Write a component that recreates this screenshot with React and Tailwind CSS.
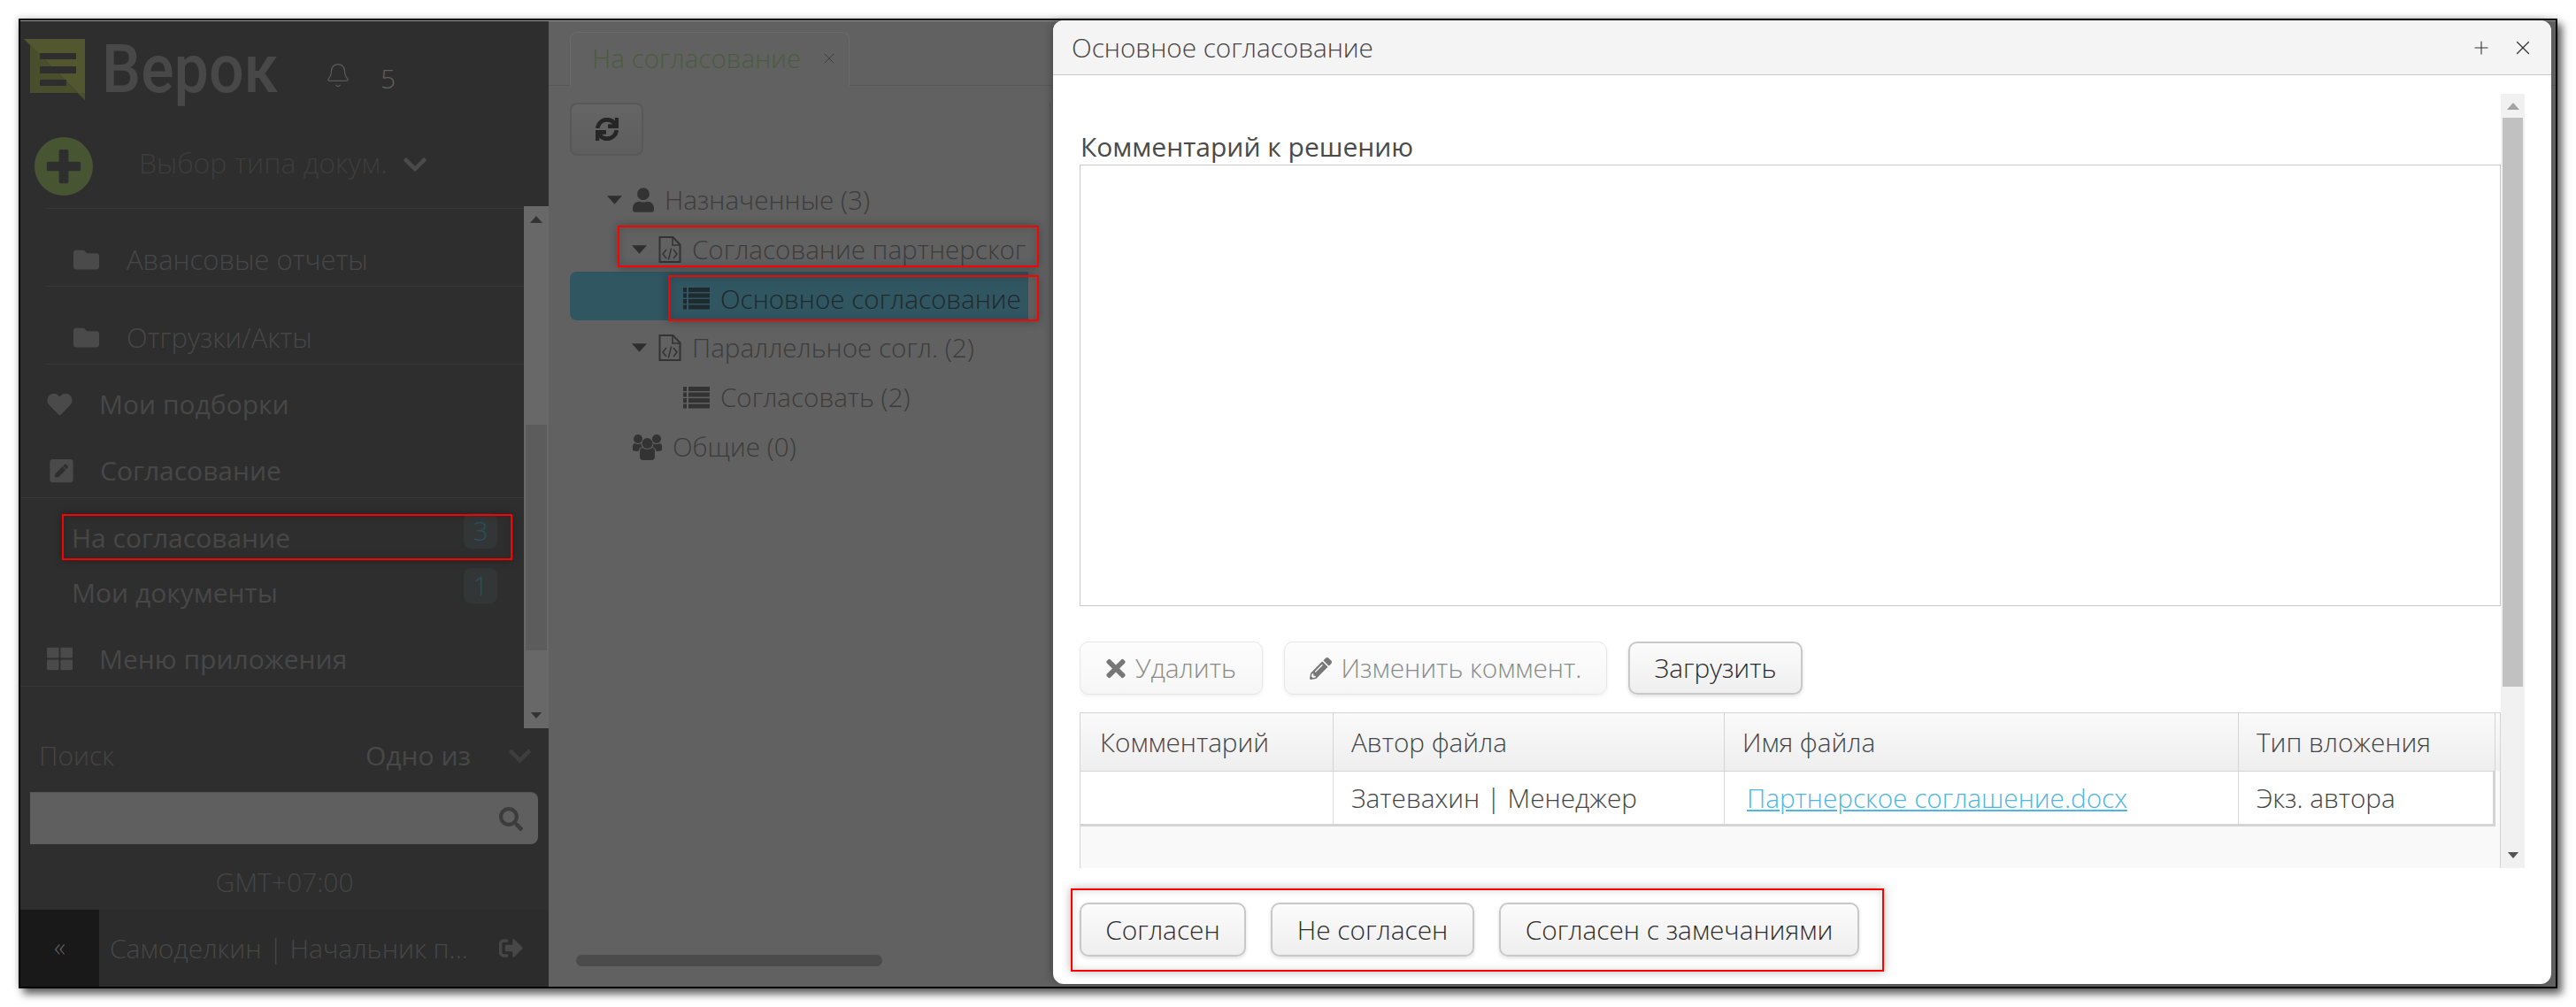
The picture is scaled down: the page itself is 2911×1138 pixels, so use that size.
import React from "react";
import {
  FaFolder, FaHeart, FaPenSquare, FaThLarge, FaChevronDown, FaSearch, FaSignOutAlt,
  FaPlusCircle, FaUser, FaSync, FaTimes, FaPencilAlt,
} from "react-icons/fa";
import { Bell, X, Plus } from "lucide-react";

function Tri({ up, cls }) {
  return (
    <svg viewBox="0 0 14 8" className={cls}>
      <polygon points={up ? "7,0 14,8 0,8" : "0,0 14,0 7,8"} fill="currentColor" />
    </svg>
  );
}

function ListIcon({ cls }) {
  return (
    <svg viewBox="0 0 30 25" className={cls}>
      {[0, 6.5, 13, 19.5].map((y) => (
        <g key={y} fill="currentColor">
          <rect x="0" y={y} width="4" height="5" />
          <rect x="6" y={y} width="24" height="5" />
        </g>
      ))}
    </svg>
  );
}

function FileCode({ cls }) {
  return (
    <svg viewBox="0 0 26 30" className={cls} fill="none" stroke="currentColor">
      <path d="M1.5 1 H16.5 L24.5 9.5 V29 H1.5 Z" strokeWidth="2" />
      <path d="M16 1 V10 H24.5" strokeWidth="1.6" />
      <path d="M9 15 L5 20 L9 25 M17 15 L21 20 L17 25 M14.6 13.5 L11.4 26.5" strokeWidth="1.5" />
    </svg>
  );
}

function UsersIcon({ cls }) {
  return (
    <svg viewBox="0 0 33 30" className={cls} fill="currentColor">
      <circle cx="16.5" cy="11" r="6" />
      <circle cx="6" cy="6" r="5" />
      <circle cx="27" cy="6" r="5" />
      <path d="M8 20 Q8 16.5 11 16 Q16.5 20 22 16 Q25 16.5 25 20 V26 Q25 30 21 30 H12 Q8 30 8 26 Z" />
      <path d="M0 19 V14 Q0 11.5 2.5 11 Q6 13 9.5 11 Q9.5 14 11 15 Q7 16 6.5 20 Q2 20 0 19 Z" />
      <path d="M33 19 V14 Q33 11.5 30.5 11 Q27 13 23.5 11 Q23.5 14 22 15 Q26 16 26.5 20 Q31 20 33 19 Z" />
    </svg>
  );
}

function Logo() {
  return (
    <svg viewBox="0 0 69 69" className="w-[69px] h-[69px] shrink-0">
      <polygon points="0,0 69,0 69,69" fill="#53572f" />
      <polygon points="0,0 69,69 69,61 7,61 7,7" fill="#494e2c" />
      <rect x="18" y="16" width="41" height="7" fill="#2e2e2e" />
      <rect x="18" y="31" width="41" height="8" fill="#2e2e2e" />
      <rect x="18" y="46" width="30" height="7" fill="#2e2e2e" />
    </svg>
  );
}

function RedBox({ cls }) {
  return (
    <div className={"absolute border-2 border-[#ff0000] shadow-[0_0_10px_rgba(0,0,0,0.3),inset_0_0_10px_rgba(0,0,0,0.15)] pointer-events-none " + cls} />
  );
}

function Btn({ children, cls, disabled }) {
  return (
    <button
      className={
        "flex items-center justify-center gap-[11px] rounded-[10px] font-light text-[29.8px] bg-linear-to-b " +
        (disabled
          ? "border border-[#e6e6e6] from-[#fdfdfd] to-[#f6f6f6] text-[#8a8a8a] shadow-[0_2px_4px_rgba(0,0,0,0.06)] "
          : "border-2 border-[#c8c8c8] from-[#fbfbfb] to-[#efefef] text-[#2c2c2c] shadow-[0_2px_4px_rgba(0,0,0,0.12)] ") +
        cls
      }
    >
      {children}
    </button>
  );
}

function Sidebar() {
  return (
    <aside className="w-[597px] shrink-0 bg-[#2e2e2e] flex flex-col text-[#474747] text-[30px] leading-none">
      <div className="h-[211px] flex flex-col">
        <div className="h-[130px] flex items-start pl-[4px] pt-[20px]">
          <Logo />
          <span className="ml-[19px] w-[197px] h-[69px] leading-[69px] text-[76px] font-medium text-[#484848] font-['Roboto',sans-serif] origin-left scale-x-[0.92]">Верок</span>
          <Bell strokeWidth={1} className="ml-[55px] mt-[26px] w-[30px] h-[30px] text-[#5a5a5a]" />
          <span className="ml-[33px] mt-[30px] text-[#5f5f5f]">5</span>
        </div>
        <div className="h-[81px] flex items-start pl-[15px]">
          <FaPlusCircle className="w-[68px] h-[68px] text-[#485533] shrink-0" />
          <span className="ml-[51px] w-[270px] mt-[14px] h-[32px] whitespace-nowrap text-[32px] text-[#3d3d3d]">Выбор типа докум.</span>
          <FaChevronDown className="ml-[27px] mt-[17px] w-[30px] h-[30px] text-[#4a4a4a]" />
        </div>
      </div>

      <div className="h-[588px] flex">
        <div className="w-[569px] overflow-hidden">
          <div className="ml-[29px] h-[88px] border-t border-[#383838] pl-[31px] pt-[27px] flex items-center text-[31px]">
            <FaFolder className="w-[29px] h-[29px] text-[#4a4a4a]" />
            <span className="ml-[31px]">Авансовые отчеты</span>
          </div>
          <div className="ml-[29px] h-[88px] border-t border-[#383838] pl-[31px] pt-[27px] flex items-center text-[31px]">
            <FaFolder className="w-[29px] h-[29px] text-[#4a4a4a]" />
            <span className="ml-[31px]">Отгрузки/Акты</span>
          </div>
          <div className="ml-[29px] h-[84px] border-t border-[#383838] pt-[6px] flex items-center">
            <FaHeart className="w-[31px] h-[28px] text-[#4a4a4a]" />
            <span className="ml-[29px] font-normal">Мои подборки</span>
          </div>
          <div className="h-[68px] border-b border-[#383838] pl-[31px] pt-[6px] flex items-center">
            <FaPenSquare className="w-[27px] h-[30px] text-[#4a4a4a] mx-[2px]" />
            <span className="ml-[28px] font-normal">Согласование</span>
          </div>
          <div className="h-[15px]" />
          <div className="h-[62px] flex items-start pl-[58px]">
            <span className="leading-[60px] font-normal flex-1">На согласование</span>
            <span className="mt-[2px] mr-[30px] w-[38px] h-[40px] rounded-lg bg-[#333637] text-[#28505f] flex items-center justify-center">3</span>
          </div>
          <div className="h-[62px] flex items-start pl-[58px]">
            <span className="leading-[60px] font-normal flex-1">Мои документы</span>
            <span className="mt-[2px] mr-[30px] w-[38px] h-[40px] rounded-lg bg-[#333637] text-[#28505f] flex items-center justify-center">1</span>
          </div>
          <div className="h-[74px] border-b border-[#383838] pl-[30px] pt-[12px] flex items-center">
            <FaThLarge className="w-[29px] h-[29px] text-[#4a4a4a]" />
            <span className="ml-[30px] font-normal">Меню приложения</span>
          </div>
          <div className="pl-[29px] mt-[44px] whitespace-nowrap">Информация</div>
        </div>
        <div className="w-[28px] bg-[#686868] flex flex-col -mt-[2px] text-[#333333]">
          <div className="h-[247px] flex justify-center pt-[11px]">
            <Tri up cls="w-[14px] h-[8px]" />
          </div>
          <div className="mx-[2px] h-[255px] bg-[#5c5c5c]" />
          <div className="flex-1 flex justify-center items-end pb-[11px]">
            <Tri cls="w-[14px] h-[7px]" />
          </div>
        </div>
      </div>

      <div className="h-[205px]">
        <div className="h-[62px] pl-[21px] flex items-center">
          <span className="w-[369px] text-[#454545]">Поиск</span>
          <span className="w-[160px] font-normal text-[#484848]">Одно из</span>
          <FaChevronDown className="w-[29px] h-[29px] text-[#3e3e3e]" />
        </div>
        <div className="mt-[10px] ml-[11px] w-[574px] h-[59px] bg-[#5f5f5f] border-t border-[#555555] rounded-r-lg flex items-center justify-end pr-[17px]">
          <FaSearch className="w-[27px] h-[27px] text-[#3c3c3c]" />
        </div>
        <div className="pt-[28px] text-center text-[#454545]">GMT+07:00</div>
      </div>

      <div className="h-[87px] bg-[#2c2c2c] flex items-center">
        <div className="w-[89px] h-full bg-[#191919] flex items-center justify-center text-[#5a5a5a] pb-[4px]">«</div>
        <span className="ml-[12px] w-[440px] whitespace-nowrap text-[#474747]">Самоделкин | Начальник п...</span>
        <FaSignOutAlt className="w-[27px] h-[27px] text-[#474747]" />
      </div>
    </aside>
  );
}

function TreeRow({ cls, children }) {
  return <div className={"flex items-center whitespace-nowrap " + cls}>{children}</div>;
}

function Main() {
  return (
    <main className="flex-1 relative bg-[#616161] flex flex-col text-[#3c3c3c] text-[29.6px] leading-none">
      <div className="h-[73px] border-b border-[#585858] pl-[24px] flex items-end">
        <div className="w-[316px] h-[61px] -mb-px bg-[#616161] border border-b-0 border-[#6b6b6b] rounded-t-lg pl-[24px] flex items-center text-[#4b5c3e] pb-[2px]">
          <span className="w-[258px]">На согласование</span>
          <X strokeWidth={1.2} className="w-[20px] h-[20px] text-[#3f3f3f]" />
        </div>
      </div>
      <div className="mt-[19px] ml-[24px] w-[83px] h-[60px] rounded-lg border-2 border-[#585858] bg-linear-to-b from-[#656565] to-[#5e5e5e] flex items-center justify-center text-[#262626]">
        <FaSync className="w-[26px] h-[26px]" stroke="currentColor" strokeWidth={24} />
      </div>
      <div className="mt-[23px]">
        <TreeRow cls="h-[56px] pb-[2px] pl-[66px]">
          <Tri cls="w-[17px] h-[10px] text-[#2e2e2e]" />
          <FaUser className="ml-[12px] w-[24px] h-[28px] text-[#333333]" />
          <span className="ml-[12px]">Назначенные (3)</span>
        </TreeRow>
        <TreeRow cls="h-[52px] pt-[2px] pl-[94px]">
          <Tri cls="w-[17px] h-[10px] text-[#2e2e2e] shrink-0" />
          <FileCode cls="ml-[13px] w-[26px] h-[30px] text-[#333333] shrink-0" />
          <span className="ml-[12px]">Согласование партнерског</span>
        </TreeRow>
        <TreeRow cls="h-[55px] pt-[6px] pl-[128px] ml-[24px] w-[518px] bg-[#305661] rounded-l-lg text-[#20282c]">
          <ListIcon cls="w-[30px] h-[25px] text-[#1f2a2f]" />
          <span className="ml-[12px]">Основное согласование</span>
        </TreeRow>
        <TreeRow cls="h-[56px] mt-[4px] pb-[2px] pl-[94px]">
          <Tri cls="w-[17px] h-[10px] text-[#2e2e2e]" />
          <FileCode cls="ml-[13px] w-[26px] h-[30px] text-[#333333]" />
          <span className="ml-[12px]">Параллельное согл. (2)</span>
        </TreeRow>
        <TreeRow cls="h-[56px] pb-[2px] pl-[152px]">
          <ListIcon cls="w-[30px] h-[25px] text-[#333333]" />
          <span className="ml-[12px]">Согласовать (2)</span>
        </TreeRow>
        <TreeRow cls="h-[56px] pb-[2px] pl-[95px]">
          <UsersIcon cls="w-[33px] h-[30px] text-[#333333]" />
          <span className="ml-[12px]">Общие (0)</span>
        </TreeRow>
      </div>
      <div className="flex-1" />
      <div className="ml-[31px] mb-[23px] w-[346px] h-[13px] rounded-full bg-[#4b4b4b]" />
      <div className="absolute left-[566px] top-[92px] bottom-[17px] w-px bg-[#575757]" />
    </main>
  );
}

function Th({ children, cls }) {
  return <div className={"h-[65px] flex items-center border-r border-[#d4d4d4] " + cls}>{children}</div>;
}
function Td({ children, cls }) {
  return <div className={"h-[59px] flex items-center border-r border-[#d9d9d9] " + cls}>{children}</div>;
}

function Modal() {
  return (
    <section className="absolute left-[1167px] top-0 w-[1693px] h-[1089px] bg-white rounded-xl overflow-hidden flex flex-col text-[#444444] text-[29.7px] font-light leading-none shadow-[-3px_0_8px_rgba(0,0,0,0.2)]">
      <header className="h-[62px] shrink-0 bg-[#f4f4f4] border-b border-[#c9c9c9] flex items-center pl-[21px] pr-[19px]">
        <span className="flex-1">Основное согласование</span>
        <Plus strokeWidth={1.1} className="w-[24px] h-[24px] text-[#333333]" />
        <X strokeWidth={1.1} className="ml-[22px] w-[26px] h-[26px] text-[#333333]" />
      </header>
      <div className="mt-[21px] ml-[30px] h-[875px] flex overflow-hidden">
        <div className="w-[1606px]">
          <div className="pt-[45px] h-[75px] pl-px text-[30px] font-normal text-[#4a4a4a] leading-[30px]">Комментарий к решению</div>
          <div className="mt-[5px] h-[499px] border border-[#c8c8c8]" />
          <div className="mt-[40px] flex gap-[24px]">
            <Btn disabled cls="w-[207px] h-[60px]"><FaTimes className="w-[22px] h-[31px] text-[#777777]" /><span>Удалить</span></Btn>
            <Btn disabled cls="w-[365px] h-[60px]"><FaPencilAlt className="w-[25px] h-[25px] text-[#777777]" /><span>Изменить коммент.</span></Btn>
            <Btn cls="w-[197px] h-[60px]">Загрузить</Btn>
          </div>
          <div className="mt-[20px] h-[176px] bg-[#f9f9f9] border-l border-r border-[#d4d4d4]">
            <div className="border-t border-[#d4d4d4] grid grid-cols-[286px_442px_581px_290px_5px]">
              <Th cls="pl-[22px] bg-linear-to-b from-[#fafafa] to-[#eeeeee]">Комментарий</Th>
              <Th cls="pl-[20px] bg-linear-to-b from-[#fafafa] to-[#eeeeee]">Автор файла</Th>
              <Th cls="pl-[20px] bg-linear-to-b from-[#fafafa] to-[#eeeeee]">Имя файла</Th>
              <Th cls="pl-[20px] bg-linear-to-b from-[#fafafa] to-[#eeeeee]">Тип вложения</Th>
              <Th cls="bg-linear-to-b from-[#fafafa] to-[#eeeeee] border-r-0" />
            </div>
            <div className="grid grid-cols-[286px_442px_581px_290px] w-[1599px] border-t border-b-[3px] border-b-[#d4d4d4] border-t-[#d4d4d4] bg-white">
              <Td />
              <Td cls="pl-[20px]">Затевахин | Менеджер</Td>
              <Td cls="pl-[25px]"><a href="#" className="text-[#4db6e2] underline">Партнерское соглашение.docx</a></Td>
              <Td cls="pl-[20px] border-r-[3px] border-r-[#d4d4d4]">Экз. автора</Td>
            </div>
          </div>
        </div>
        <div className="w-[27px] bg-[#f1f1f1] flex flex-col">
          <div className="h-[27px] flex items-center justify-center text-[#a3a3a3]"><Tri up cls="w-[14px] h-[8px]" /></div>
          <div className="ml-[2px] w-[23px] h-[643px] bg-[#c1c1c1]" />
          <div className="flex-1 flex items-end justify-center pb-[11px] text-[#555555]"><Tri cls="w-[14px] h-[7px]" /></div>
        </div>
      </div>
      <div className="mt-[39px] ml-[30px] flex gap-[28px]">
        <Btn cls="w-[188px] h-[61px]">Согласен</Btn>
        <Btn cls="w-[230px] h-[61px]">Не согласен</Btn>
        <Btn cls="w-[407px] h-[61px]">Согласен с замечаниями</Btn>
      </div>
    </section>
  );
}

export default function App() {
  return (
    <div className="w-[2911px] h-[1138px] bg-white pt-[21px] pl-[21px] font-['Open_Sans',sans-serif] font-light overflow-hidden">
      <div className="relative w-[2869px] h-[1096px] border-2 border-black shadow-[5px_6px_9px_rgba(0,0,0,0.65),-2px_-2px_6px_rgba(0,0,0,0.12)] flex flex-col">
        <div className="h-px bg-[#9a9a9a] shrink-0" />
        <div className="flex flex-1 min-h-0">
          <Sidebar />
          <Main />
        </div>
        <Modal />
        <RedBox cls="left-[47px] top-[558px] w-[509px] h-[52px]" />
        <RedBox cls="left-[675px] top-[232px] w-[476px] h-[47px]" />
        <RedBox cls="left-[732px] top-[288px] w-[419px] h-[52px]" />
        <RedBox cls="left-[1187px] top-[981px] w-[919px] h-[94px]" />
      </div>
    </div>
  );
}
